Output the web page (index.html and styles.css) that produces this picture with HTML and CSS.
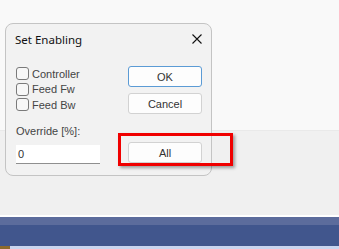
FILE: index.html
```html
<!DOCTYPE html>
<html>
<head>
<meta charset="utf-8">
<link rel="stylesheet" href="styles.css">
</head>
<body>
<div class="page">
  <div class="top"></div>
  <div class="lower"></div>
  <div class="sep"></div>
  <div class="band1"></div>
  <div class="band2"></div>
  <div class="band3"><div class="brown"></div></div>

  <div class="dialog">
    <div class="titlebar">
      <span class="title">Set Enabling</span>
      <svg class="close" width="10" height="10" viewBox="0 0 10 10"><path d="M0.5 0.5 L9.5 9.5 M9.5 0.5 L0.5 9.5" stroke="#111" stroke-width="1.1" fill="none"/></svg>
    </div>
    <div class="body">
      <div class="leftcol">
        <label class="chk"><span class="box"></span><span>Controller</span></label>
        <label class="chk"><span class="box"></span><span>Feed Fw</span></label>
        <label class="chk"><span class="box"></span><span>Feed Bw</span></label>
        <div class="ovlabel">Override [%]:</div>
        <div class="input">0</div>
      </div>
      <div class="rightcol">
        <div class="btn ok">OK</div>
        <div class="btn cancel">Cancel</div>
        <div class="btn all">All</div>
      </div>
    </div>
  </div>
  <div class="highlight"></div>
</div>
</body>
</html>
```
FILE: styles.css
```css
html, body { margin: 0; padding: 0; }
body { width: 339px; height: 249px; overflow: hidden; font-family: "Liberation Sans", Arial, sans-serif; }
.page { position: relative; width: 339px; height: 249px; display: flex; flex-direction: column; }
.top { height: 130px; background: #f9f9f9; border-bottom: 1px solid #e9e9e9; }
.lower { height: 84px; background: #f0f0f0; }
.sep { height: 2px; background: #ffffff; }
.band1 { height: 8px; background: #5c6c9c; }
.band2 { height: 21px; background: #41568d; }
.band3 { flex: 1; background: #c9d5ef; }
.brown { width: 10px; height: 3px; background: #8c6a2c; }

.dialog {
  position: absolute; left: 5px; top: 23px; width: 205px; height: 151px;
  border: 1px solid #c4c4c4; border-radius: 8px; background: #f2f2f2;
  display: flex; flex-direction: column;
}
.titlebar { height: 30px; display: flex; align-items: center; justify-content: space-between; padding: 0 9px 0 9px; }
.title { font-family: "Noto Sans", "Open Sans", sans-serif; font-size: 11.5px; color: #111; }
.close { display: block; }
.body { display: flex; justify-content: space-between; padding: 12px 9px 0 10px; }
.leftcol { width: 84px; display: flex; flex-direction: column; }
.chk { height: 15.5px; display: flex; align-items: center; gap: 3px; font-size: 11px; color: #444; }
.box { width: 11px; height: 11px; border: 1px solid #7a7a7a; border-radius: 3px; background: #f7f7f7; }
.ovlabel { margin-top: 12px; font-size: 11px; color: #444; height: 13px; line-height: 13px; }
.input { margin-top: 7px; height: 18px; background: #fff; border-bottom: 1px solid #8f8f8f; font-size: 11px; color: #333; line-height: 18px; padding-left: 2px; }
.rightcol { width: 74px; display: flex; flex-direction: column; }
.btn { height: 19px; border: 1px solid #d2d2d2; border-radius: 3px; background: #fdfdfd; font-size: 11px; color: #333; display: flex; align-items: center; justify-content: center; }
.ok { border-color: #5b9bd5; }
.cancel { margin-top: 6px; }
.all { margin-top: 28px; }

.highlight {
  position: absolute; left: 118px; top: 133px; width: 109px; height: 27px;
  border: 3px solid #f00000; box-shadow: 2px 2px 3px rgba(0,0,0,0.35);
}
```
